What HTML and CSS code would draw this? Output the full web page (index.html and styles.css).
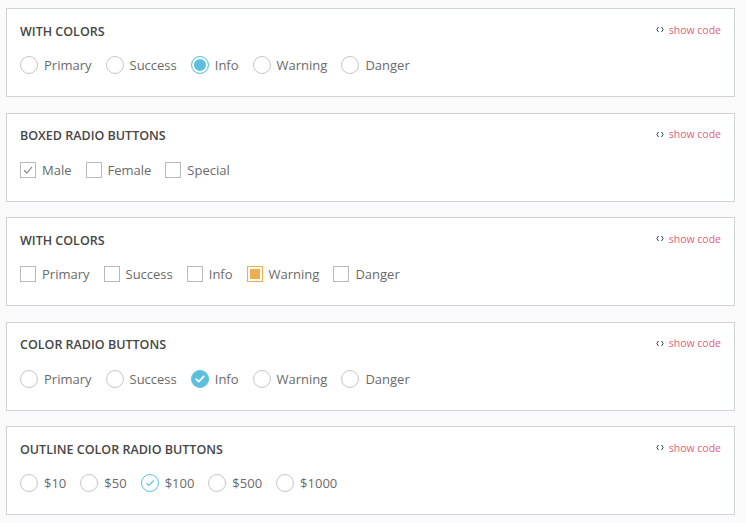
FILE: index.html
```html
<!DOCTYPE html>
<html lang="en">
<head>
  <meta charset="UTF-8">
  <meta name="viewport" content="width=device-width, initial-scale=1.0">
  <title>Radio Buttons</title>
  <link rel="stylesheet" href="styles.css">
</head>
<body>

  <div class="panel">
    <div class="panel-head">
      <h4>With colors</h4>
      <a class="show-code" href="#"><svg class="code-icon" width="8" height="7" viewBox="0 0 8 7"><path d="M2.5 1 L0.8 3.5 L2.5 6 M5.5 1 L7.2 3.5 L5.5 6" fill="none" stroke="#2d3e50" stroke-width="1"/></svg>show code</a>
    </div>
    <div class="options">
      <label class="opt"><span class="radio"></span>Primary</label>
      <label class="opt"><span class="radio"></span>Success</label>
      <label class="opt"><span class="radio dot-info"></span>Info</label>
      <label class="opt"><span class="radio"></span>Warning</label>
      <label class="opt"><span class="radio"></span>Danger</label>
    </div>
  </div>

  <div class="panel">
    <div class="panel-head">
      <h4>Boxed radio buttons</h4>
      <a class="show-code" href="#"><svg class="code-icon" width="8" height="7" viewBox="0 0 8 7"><path d="M2.5 1 L0.8 3.5 L2.5 6 M5.5 1 L7.2 3.5 L5.5 6" fill="none" stroke="#2d3e50" stroke-width="1"/></svg>show code</a>
    </div>
    <div class="options">
      <label class="opt"><span class="box">
        <svg width="14" height="14" viewBox="0 0 14 14"><path d="M3 7.2 L5.8 10 L11 4" fill="none" stroke="#777" stroke-width="1.1"/></svg>
      </span>Male</label>
      <label class="opt"><span class="box"></span>Female</label>
      <label class="opt"><span class="box"></span>Special</label>
    </div>
  </div>

  <div class="panel">
    <div class="panel-head">
      <h4>With colors</h4>
      <a class="show-code" href="#"><svg class="code-icon" width="8" height="7" viewBox="0 0 8 7"><path d="M2.5 1 L0.8 3.5 L2.5 6 M5.5 1 L7.2 3.5 L5.5 6" fill="none" stroke="#2d3e50" stroke-width="1"/></svg>show code</a>
    </div>
    <div class="options">
      <label class="opt"><span class="box"></span>Primary</label>
      <label class="opt"><span class="box"></span>Success</label>
      <label class="opt"><span class="box"></span>Info</label>
      <label class="opt"><span class="box fill-warning"></span>Warning</label>
      <label class="opt"><span class="box"></span>Danger</label>
    </div>
  </div>

  <div class="panel">
    <div class="panel-head">
      <h4>Color radio buttons</h4>
      <a class="show-code" href="#"><svg class="code-icon" width="8" height="7" viewBox="0 0 8 7"><path d="M2.5 1 L0.8 3.5 L2.5 6 M5.5 1 L7.2 3.5 L5.5 6" fill="none" stroke="#2d3e50" stroke-width="1"/></svg>show code</a>
    </div>
    <div class="options">
      <label class="opt"><span class="radio"></span>Primary</label>
      <label class="opt"><span class="radio"></span>Success</label>
      <label class="opt"><span class="radio solid-info">
        <svg width="12" height="12" viewBox="0 0 12 12"><path d="M2.2 6.2 L4.8 8.6 L9.8 3.4" fill="none" stroke="#fff" stroke-width="1.8" stroke-linecap="round" stroke-linejoin="round"/></svg>
      </span>Info</label>
      <label class="opt"><span class="radio"></span>Warning</label>
      <label class="opt"><span class="radio"></span>Danger</label>
    </div>
  </div>

  <div class="panel">
    <div class="panel-head">
      <h4>Outline color radio buttons</h4>
      <a class="show-code" href="#"><svg class="code-icon" width="8" height="7" viewBox="0 0 8 7"><path d="M2.5 1 L0.8 3.5 L2.5 6 M5.5 1 L7.2 3.5 L5.5 6" fill="none" stroke="#2d3e50" stroke-width="1"/></svg>show code</a>
    </div>
    <div class="options">
      <label class="opt"><span class="radio"></span>$10</label>
      <label class="opt"><span class="radio"></span>$50</label>
      <label class="opt"><span class="radio outline-info">
        <svg width="12" height="12" viewBox="0 0 12 12"><path d="M2.4 6.2 L4.9 8.5 L9.6 3.5" fill="none" stroke="#5bc0de" stroke-width="1.1"/></svg>
      </span>$100</label>
      <label class="opt"><span class="radio"></span>$500</label>
      <label class="opt"><span class="radio"></span>$1000</label>
    </div>
  </div>

</body>
</html>
```

FILE: styles.css
```css
body {
  margin: 8px 11px 0 6px;
  font-family: "Open Sans", "Noto Sans", Arial, sans-serif;
  background-color: #fafafa;
  color: #666;
}

.panel {
  background-color: #fff;
  border: 1px solid #ced3d6;
  padding: 13px 13px 21px 13px;
  margin-bottom: 15.5px;
}

.panel-head {
  display: flex;
  justify-content: space-between;
  align-items: center;
  height: 18px;
  margin-bottom: 15px;
}

h4 {
  margin: 0;
  font-size: 12.5px;
  font-weight: 600;
  color: #464646;
  text-transform: uppercase;
}

.show-code {
  display: flex;
  align-items: center;
  margin-top: -3px;
  font-size: 10.5px;
  color: #e2607a;
  text-decoration: none;
}

.code-icon {
  margin-right: 5px;
}

.options {
  display: flex;
  align-items: center;
  gap: 14px;
  height: 20px;
}

.opt {
  display: flex;
  align-items: center;
  font-size: 13px;
  color: #6a6a6a;
}

/* radio circles */
.radio {
  width: 16px;
  height: 16px;
  border: 1px solid #c6c6c6;
  border-radius: 50%;
  margin-right: 6px;
  display: flex;
  justify-content: center;
  align-items: center;
  background: #fff;
}

.dot-info {
  border-color: #5bc0de;
  box-shadow: inset 0 0 0 2px #fff, inset 0 0 0 9px #5bc0de;
}

.solid-info {
  border-color: #5bc0de;
  background-color: #5bc0de;
}

.outline-info {
  border-color: #5bc0de;
}

/* boxes */
.box {
  width: 14px;
  height: 14px;
  border: 1px solid #b9b9b9;
  margin-right: 6px;
  display: flex;
  justify-content: center;
  align-items: center;
  background: #fff;
}

.fill-warning {
  border-color: #f0ad4e;
  box-shadow: inset 0 0 0 2px #fff, inset 0 0 0 8px #f0ad4e;
}
```
